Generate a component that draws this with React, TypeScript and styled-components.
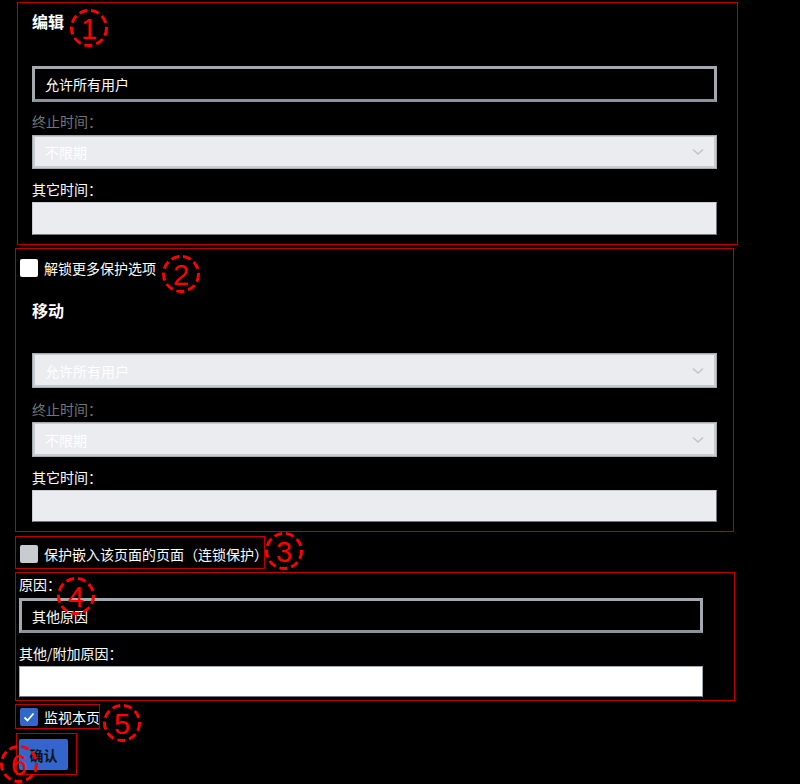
import styled, { createGlobalStyle } from 'styled-components';

const GlobalStyle = createGlobalStyle`
  html, body {
    margin: 0;
    padding: 0;
    background: #000;
  }
  body {
    font-family: "Noto Sans CJK SC", "Noto Sans", sans-serif;
    font-size: 14px;
    color: #fff;
    text-spacing-trim: space-all;
  }
`;

const Chevron = () => (
  <svg width="12" height="8" viewBox="0 0 12 8">
    <polyline points="1,1.5 6,6 11,1.5" fill="none" stroke="#c0c4ca" strokeWidth="1.5" />
  </svg>
);

const Tick = () => (
  <svg width="14" height="14" viewBox="0 0 14 14">
    <polyline points="2.5,7.5 5.5,10.5 11.5,3.5" fill="none" stroke="#fff" strokeWidth="1.8" />
  </svg>
);

const Marker = ({ n, x, y }: { n: number; x: number; y: number }) => (
  <MarkerSvg $x={x} $y={y} width="40" height="40" viewBox="0 0 40 40">
    <circle cx="20" cy="20" r="17.5" fill="none" stroke="#f00" strokeWidth="3" strokeDasharray="8 4" />
    <text x="20" y="30.5" textAnchor="middle" fontSize="29" fill="#f00" fontFamily="Liberation Sans, sans-serif">
      {n}
    </text>
  </MarkerSvg>
);

const ProtectSelect = ({ label }: { label: string }) => (
  <DisabledSelect>
    <span>{label}</span>
    <Chevron />
  </DisabledSelect>
);

const App = () => (
  <Page>
    <GlobalStyle />

    <Frame $ml={17} $w={721} $mt={0} $pad="6px 20px 9px 14px">
      <Heading>编辑</Heading>
      <DarkField $mt={33} $h={36}>允许所有用户</DarkField>
      <Label $muted $mt={9}>终止时间：</Label>
      <Slot $mt={4} $h={34}><ProtectSelect label="不限期" /></Slot>
      <Label $mt={10}>其它时间：</Label>
      <GrayInput $mt={3} $h={33} />
    </Frame>

    <Frame $ml={15} $w={719} $mt={3} $pad="9px 16px 9px 3px">
      <CheckRow>
        <Box $kind="white" />
        解锁更多保护选项
      </CheckRow>
      <Group>
        <Heading $mt={20}>移动</Heading>
        <Slot $mt={31} $h={35}><ProtectSelect label="允许所有用户" /></Slot>
        <Label $muted $mt={11}>终止时间：</Label>
        <Slot $mt={3} $h={35}><ProtectSelect label="不限期" /></Slot>
        <Label $mt={10}>其它时间：</Label>
        <GrayInput $mt={3} $h={32} />
      </Group>
    </Frame>

    <Frame $ml={15} $w={250} $mt={4} $pad="7px 0 4px 3px">
      <CheckRow>
        <Box $kind="gray" />
        保护嵌入该页面的页面（连锁保护）
      </CheckRow>
    </Frame>

    <Frame $ml={15} $w={720} $mt={3} $pad="1px 31px 3px 3px">
      <Label>原因：</Label>
      <DarkField $mt={4} $h={35}>其他原因</DarkField>
      <Label $mt={10}>其他/附加原因：</Label>
      <WhiteInput />
    </Frame>

    <Frame $ml={15} $w={85} $mt={3} $pad="2px 3px 1px 3px">
      <CheckRow>
        <Box $kind="blue"><Tick /></Box>
        监视本页
      </CheckRow>
    </Frame>

    <Frame $ml={16} $w={61} $mt={4} $pad="5px 8px 4px 2px">
      <Submit>确认</Submit>
    </Frame>

    <Marker n={1} x={89} y={28} />
    <Marker n={2} x={181} y={274} />
    <Marker n={3} x={284} y={551} />
    <Marker n={4} x={76} y={596} />
    <Marker n={5} x={122} y={723} />
    <Marker n={6} x={19} y={764} />
  </Page>
);

const Page = styled.div`
  position: relative;
  width: 800px;
  height: 784px;
  padding-top: 2px;
  box-sizing: border-box;
  overflow: hidden;
  background: #000;
`;

const Frame = styled.section<{ $ml: number; $w: number; $mt: number; $pad: string }>`
  box-sizing: border-box;
  margin: ${(p) => p.$mt}px 0 0 ${(p) => p.$ml}px;
  width: ${(p) => p.$w}px;
  padding: ${(p) => p.$pad};
  border: 1px solid #c00000;
  display: flex;
  flex-direction: column;
`;

const Group = styled.div`
  display: flex;
  flex-direction: column;
  padding-left: 13px;
`;

const Heading = styled.h3<{ $mt?: number }>`
  margin: ${(p) => p.$mt ?? 0}px 0 0;
  font-size: 16px;
  line-height: 24px;
  font-weight: 700;
  color: #fff;
`;

const Label = styled.div<{ $mt?: number; $muted?: boolean }>`
  margin-top: ${(p) => p.$mt ?? 0}px;
  line-height: 20px;
  height: 20px;
  font-size: 14px;
  color: ${(p) => (p.$muted ? '#72777d' : '#fff')};
  white-space: nowrap;
`;

const DarkField = styled.div<{ $mt: number; $h: number }>`
  box-sizing: border-box;
  margin-top: ${(p) => p.$mt}px;
  height: ${(p) => p.$h}px;
  border: 3px solid #a2a9b1;
  border-bottom-color: #8d939a;
  background: #000;
  color: #fff;
  display: flex;
  align-items: center;
  padding-left: 10px;
  font-size: 14px;
`;

const Slot = styled.div<{ $mt: number; $h: number }>`
  margin-top: ${(p) => p.$mt}px;
  height: ${(p) => p.$h}px;
  display: flex;
`;

const DisabledSelect = styled.div`
  box-sizing: border-box;
  flex: 1;
  display: flex;
  align-items: center;
  justify-content: space-between;
  padding: 0 12px 0 12px;
  background: #eaecf0;
  border: 1px solid #a2a9b1;
  box-shadow: inset 2px 1px 0 #c8ccd1, inset -2px -2px 0 #c8ccd1;
  color: #fff;
  font-size: 14px;
`;

const GrayInput = styled.div<{ $mt: number; $h: number }>`
  box-sizing: border-box;
  margin-top: ${(p) => p.$mt}px;
  height: ${(p) => p.$h}px;
  background: #eaecf0;
  border: 1px solid #c8ccd1;
  border-bottom-color: #72777d;
  border-right-color: #72777d;
`;

const WhiteInput = styled.div`
  box-sizing: border-box;
  margin-top: 3px;
  height: 31px;
  background: #fff;
  border: 1px solid #a2a9b1;
  border-bottom-color: #72777d;
`;

const CheckRow = styled.label`
  display: flex;
  align-items: center;
  gap: 6px;
  height: 20px;
  font-size: 14px;
  color: #fff;
  white-space: nowrap;
`;

const Box = styled.span<{ $kind: 'white' | 'gray' | 'blue' }>`
  box-sizing: border-box;
  width: 18px;
  height: 18px;
  flex: none;
  margin-left: 1px;
  border-radius: 2px;
  display: flex;
  align-items: center;
  justify-content: center;
  background: ${(p) => (p.$kind === 'blue' ? '#3366cc' : p.$kind === 'gray' ? '#c8ccd1' : '#fff')};
`;

const Submit = styled.button`
  box-sizing: border-box;
  width: 49px;
  height: 31px;
  padding: 0;
  border: none;
  border-radius: 2px;
  background: #3366cc;
  color: #101418;
  font-family: "Noto Sans CJK SC", sans-serif;
  font-size: 14px;
  font-weight: 700;
`;

const MarkerSvg = styled.svg<{ $x: number; $y: number }>`
  position: absolute;
  left: ${(p) => p.$x - 20}px;
  top: ${(p) => p.$y - 20}px;
  pointer-events: none;
`;

export default App;
